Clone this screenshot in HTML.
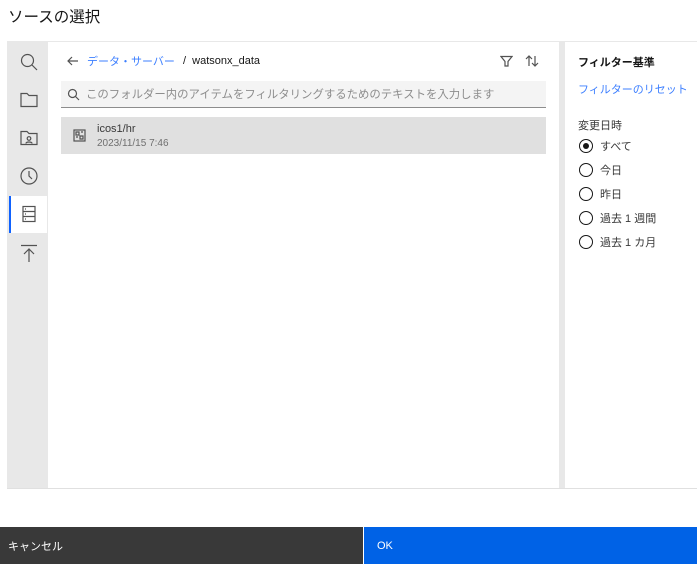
<!DOCTYPE html>
<html><head><meta charset="utf-8"><style>
*{margin:0;padding:0;box-sizing:border-box}
body{width:697px;height:564px;background:#fff;font-family:"Liberation Sans","Noto Sans CJK JP",sans-serif;color:#161616;position:relative;overflow:hidden}
.abs{position:absolute;white-space:nowrap}
.t{font-size:11px}
svg{position:absolute;fill:none;stroke:#525252;stroke-width:1.2}
</style></head><body>
<div class="abs" style="left:8px;top:5px;font-size:15.5px;">ソースの選択</div>
<div class="abs" style="left:7px;top:41px;width:690px;height:448px;border-top:1px solid #e8e8e8;border-bottom:1px solid #e0e0e0;"></div>
<div class="abs" style="left:7px;top:42px;width:41px;height:446px;background:#e8e8e8"></div>
<div class="abs" style="left:9px;top:196px;width:38px;height:37px;background:#fff;border-left:2px solid #0f62fe"></div>
<svg style="left:19px;top:52px" width="20" height="20"><circle cx="8.5" cy="8.5" r="6"/><path d="M13 13l5 5"/></svg>
<svg style="left:19px;top:90px" width="20" height="20"><path d="M2 3.5h6l2 2h8v11H2z"/></svg>
<svg style="left:19px;top:128px" width="20" height="20"><path d="M2 3.5h6l2 2h8v11H2z"/><circle cx="10" cy="10.5" r="1.8"/><path d="M7 15.5c0-2 6-2 6 0"/></svg>
<svg style="left:19px;top:166px" width="20" height="20"><circle cx="10" cy="10" r="8"/><path d="M10 5v5l3 3"/></svg>
<svg style="left:19px;top:204px" width="20" height="20"><rect x="4" y="2.5" width="12" height="15"/><path d="M4 7.5h12M4 12.5h12"/><path d="M6 5h1M6 10h1M6 15h1"/></svg>
<svg style="left:19px;top:243px" width="20" height="20"><path d="M2 2.5h16M10 6v13M5 11l5-5 5 5"/></svg>
<svg style="left:66px;top:54px" width="14" height="14"><path d="M12 7H2M6 3L2 7l4 4"/></svg>
<div class="abs t" style="left:87px;top:53px;color:#3d7fff">データ・サーバー</div>
<div class="abs t" style="left:183px;top:55px">/ &nbsp;watsonx_data</div>
<svg style="left:500px;top:55px" width="13" height="13"><path d="M1 1.5h11L8 6.5V11H5V6.5z"/></svg>
<svg style="left:525px;top:54px" width="14" height="14"><path d="M4 12V2M1 5l3-3 3 3M10 2v10M7 9l3 3 3-3"/></svg>
<div class="abs" style="left:61px;top:81px;width:485px;height:27px;background:#f4f4f4;border-bottom:1px solid #8d8d8d"></div>
<svg style="left:67px;top:88px" width="13" height="13"><circle cx="5.5" cy="5.5" r="4"/><path d="M8.5 8.5l3.5 3.5"/></svg>
<div class="abs" style="left:86px;top:86px;font-size:11.4px;color:#8d8d8d">このフォルダー内のアイテムをフィルタリングするためのテキストを入力します</div>
<div class="abs" style="left:61px;top:117px;width:485px;height:37px;background:#e0e0e0"></div>
<svg style="left:73px;top:129px" width="13" height="13"><rect x="1" y="1" width="11" height="11"/><path d="M3 3h3v3H3zM7 7h3v3H7zM3 8h2M8 3h2"/></svg>
<div class="abs t" style="left:97px;top:123px;color:#393939">icos1/hr</div>
<div class="abs" style="left:97px;top:138px;font-size:10px;color:#6f6f6f">2023/11/15 7:46</div>
<div class="abs" style="left:559px;top:42px;width:6px;height:446px;background:#e8e8e8"></div>
<div class="abs t" style="left:578px;top:54px;font-weight:bold">フィルター基準</div>
<div class="abs t" style="left:578px;top:81px;color:#3d7fff">フィルターのリセット</div>
<div class="abs t" style="left:578px;top:117px;color:#393939">変更日時</div>
<div class="abs" style="left:579px;top:139px;width:14px;height:14px;border:1px solid #161616;border-radius:50%"></div>
<div class="abs" style="left:583px;top:143px;width:6px;height:6px;background:#161616;border-radius:50%"></div>
<div class="abs" style="left:579px;top:163px;width:14px;height:14px;border:1px solid #161616;border-radius:50%"></div>
<div class="abs" style="left:579px;top:187px;width:14px;height:14px;border:1px solid #161616;border-radius:50%"></div>
<div class="abs" style="left:579px;top:211px;width:14px;height:14px;border:1px solid #161616;border-radius:50%"></div>
<div class="abs" style="left:579px;top:235px;width:14px;height:14px;border:1px solid #161616;border-radius:50%"></div>
<div class="abs" style="left:600px;top:138px;font-size:11px;color:#393939">すべて</div>
<div class="abs" style="left:600px;top:162px;font-size:11px;color:#393939">今日</div>
<div class="abs" style="left:600px;top:186px;font-size:11px;color:#393939">昨日</div>
<div class="abs" style="left:600px;top:210px;font-size:11px;color:#393939">過去 1 週間</div>
<div class="abs" style="left:600px;top:234px;font-size:11px;color:#393939">過去 1 カ月</div>
<div class="abs" style="left:0;top:527px;width:363px;height:37px;background:#393939"></div>
<div class="abs" style="left:364px;top:527px;width:333px;height:37px;background:#0062e6"></div>
<div class="abs t" style="left:8px;top:538px;color:#fff">キャンセル</div>
<div class="abs" style="left:377px;top:540px;font-size:11px;color:#fff">OK</div>
</body></html>
